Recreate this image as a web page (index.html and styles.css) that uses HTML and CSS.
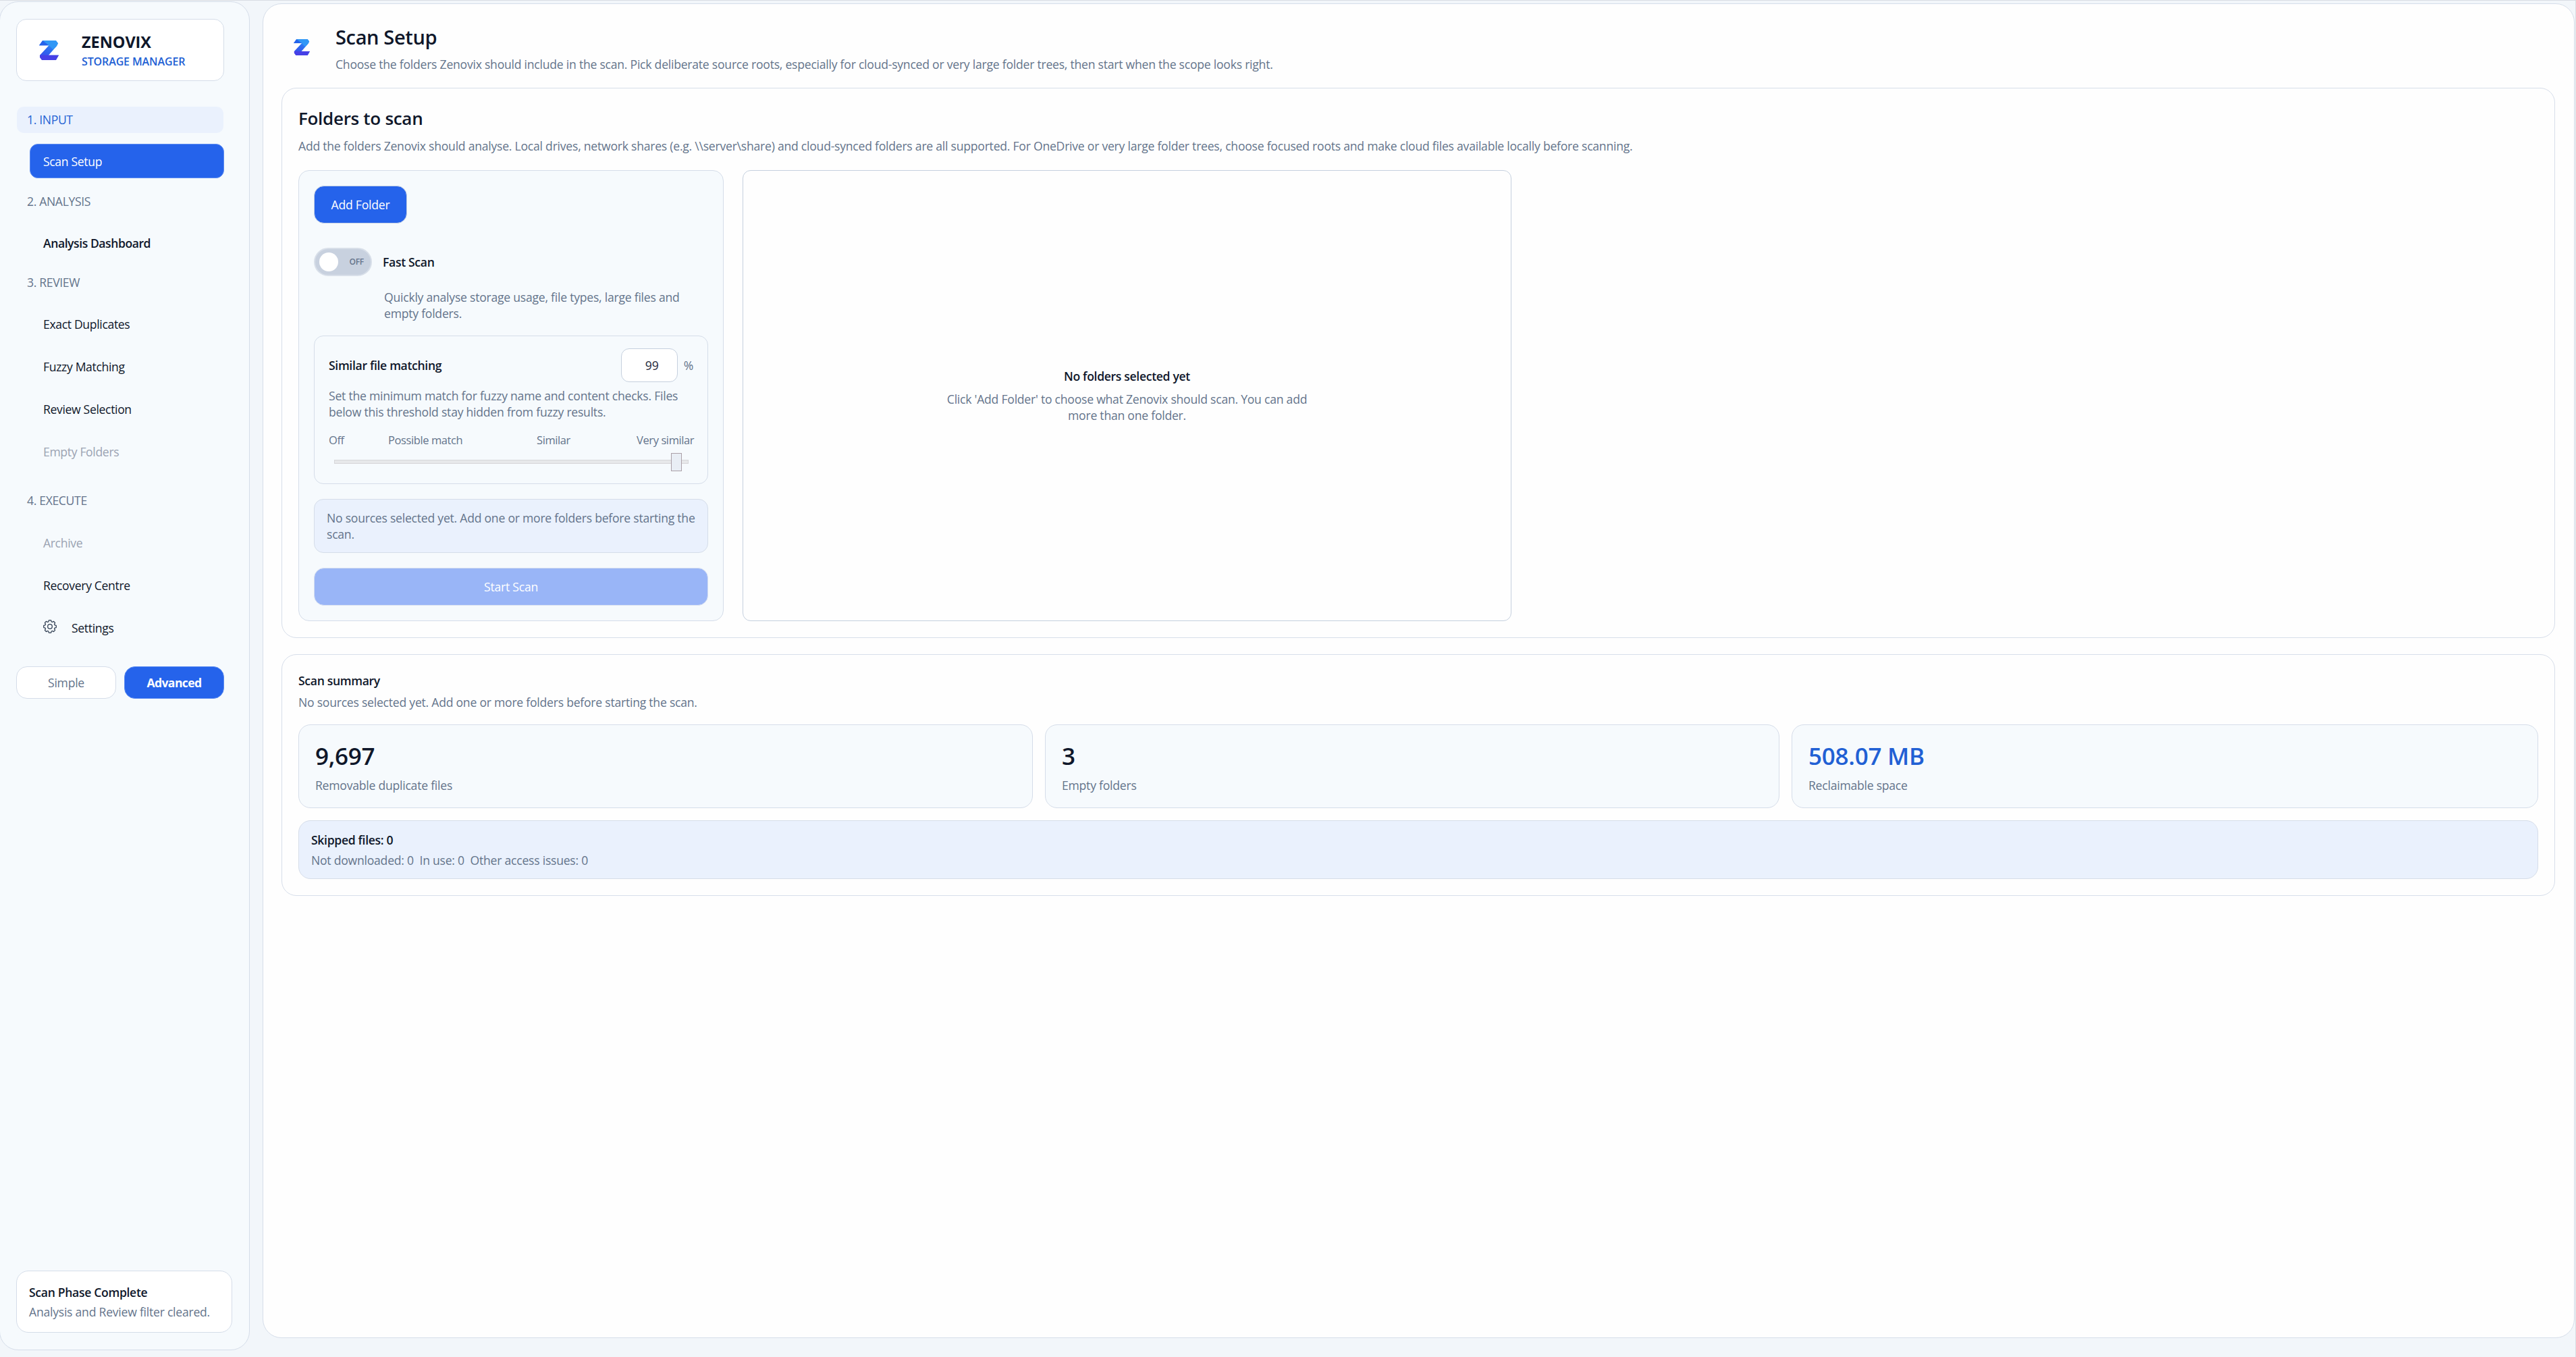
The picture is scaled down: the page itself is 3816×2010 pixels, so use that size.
FILE: index.html
```html
<!DOCTYPE html>
<html lang="en">
<head>
<meta charset="utf-8">
<title>Zenovix Storage Manager</title>
<link rel="stylesheet" href="styles.css">
</head>
<body>
<svg width="0" height="0" class="defs" aria-hidden="true">
  <defs>
    <linearGradient id="zmid" x1="0.8" y1="0" x2="0.2" y2="1">
      <stop offset="0" stop-color="#2f9bf7"/><stop offset="0.5" stop-color="#2d6cf0"/><stop offset="1" stop-color="#3a46ea"/>
    </linearGradient>
    <symbol id="zlogo" viewBox="0 0 28 28" preserveAspectRatio="none">
      <path d="M5 0H24L27 4L25 8L13.500 21H28L24 28H4L1 24V21L14 7H0Z" fill="url(#zmid)"/>
      <path d="M5 0L14 7H0Z" fill="#2563eb"/>
      <path d="M5 0H24L27 4L25 8L20 13L14 7Z" fill="#3097f6"/>
      <path d="M1 21H28L24 28H4L1 24Z" fill="#4640e6"/>
    </symbol>
  </defs>
</svg>
<div class="app">
  <aside class="sidebar">
    <div class="brand">
      <svg class="brand-logo"><use href="#zlogo"/></svg>
      <div class="brand-text">
        <div class="brand-name">ZENOVIX</div>
        <div class="brand-sub">STORAGE MANAGER</div>
      </div>
    </div>
    <nav class="nav">
      <div class="group current">1. INPUT</div>
      <a class="item active">Scan Setup</a>
      <div class="group">2. ANALYSIS</div>
      <a class="item strong">Analysis Dashboard</a>
      <div class="group">3. REVIEW</div>
      <a class="item">Exact Duplicates</a>
      <a class="item">Fuzzy Matching</a>
      <a class="item">Review Selection</a>
      <a class="item disabled">Empty Folders</a>
      <div class="group execute">4. EXECUTE</div>
      <a class="item disabled">Archive</a>
      <a class="item">Recovery Centre</a>
      <a class="item"><svg class="gear" viewBox="0 0 20 20"><path d="M8.300 .9Q10 .4 11.700 .9L12.200 3L13.500 3.500L15.300 2.400Q16.900 3.300 17.600 4.700L16.500 6.500L17 7.800L19.100 8.300Q19.600 10 19.100 11.700L17 12.200L16.500 13.500L17.600 15.300Q16.700 16.900 15.300 17.600L13.500 16.500L12.200 17L11.700 19.100Q10 19.600 8.300 19.100L7.800 17L6.500 16.500L4.700 17.600Q3.100 16.700 2.400 15.300L3.500 13.500L3 12.200L.9 11.700Q.4 10 .9 8.300L3 7.800L3.500 6.500L2.400 4.700Q3.300 3.100 4.700 2.400L6.500 3.500L7.800 3Z"/><circle cx="10" cy="10" r="3.300"/></svg>Settings</a>
    </nav>
    <div class="modes">
      <div class="mode">Simple</div>
      <div class="mode on">Advanced</div>
    </div>
    <div class="phase">
      <div class="title">Scan Phase Complete</div>
      <div class="phase-note">Analysis and Review filter cleared.</div>
    </div>
  </aside>
  <main class="main">
    <header class="header">
      <svg class="head-logo"><use href="#zlogo"/></svg>
      <div>
        <h1>Scan Setup</h1>
        <p class="lead">Choose the folders Zenovix should include in the scan. Pick deliberate source roots, especially for cloud-synced or very large folder trees, then start when the scope looks right.</p>
      </div>
    </header>
    <section class="card folders">
      <h2>Folders to scan</h2>
      <p class="intro">Add the folders Zenovix should analyse. Local drives, network shares (e.g. \\server\share) and cloud-synced folders are all supported. For OneDrive or very large folder trees, choose focused roots and make cloud files available locally before scanning.</p>
      <div class="cols">
        <div class="options">
          <div class="btn add">Add Folder</div>
          <div class="fast">
            <div class="toggle"><span class="knob"></span><span class="off">OFF</span></div>
            <div class="title">Fast Scan</div>
          </div>
          <p class="fast-note">Quickly analyse storage usage, file types, large files and<br>empty folders.</p>
          <div class="matching">
            <div class="match-head">
              <div class="title">Similar file matching</div>
              <div class="num">99</div>
              <div class="pct">%</div>
            </div>
            <p class="match-note">Set the minimum match for fuzzy name and content checks. Files<br>below this threshold stay hidden from fuzzy results.</p>
            <div class="scale"><span>Off</span><span>Possible match</span><span>Similar</span><span class="last">Very similar</span></div>
            <div class="slider"><div class="thumb"></div></div>
          </div>
          <div class="info">No sources selected yet. Add one or more folders before starting the<br>scan.</div>
          <div class="btn start">Start Scan</div>
        </div>
        <div class="list">
          <div class="title">No folders selected yet</div>
          <p>Click 'Add Folder' to choose what Zenovix should scan. You can add<br>more than one folder.</p>
        </div>
      </div>
    </section>
    <section class="card summary">
      <div class="title">Scan summary</div>
      <p class="sum-note">No sources selected yet. Add one or more folders before starting the scan.</p>
      <div class="stats">
        <div class="stat"><div class="value">9,697</div><div class="label">Removable duplicate files</div></div>
        <div class="stat"><div class="value">3</div><div class="label">Empty folders</div></div>
        <div class="stat"><div class="value blue">508.07 MB</div><div class="label">Reclaimable space</div></div>
      </div>
      <div class="skipped">
        <div class="title">Skipped files: 0</div>
        <p class="skip-note">Not downloaded: 0&nbsp; In use: 0&nbsp; Other access issues: 0</p>
      </div>
    </section>
  </main>
</div>
</body>
</html>
```
FILE: styles.css
```css
* { box-sizing: border-box; margin: 0; padding: 0; }
body { width: 3816px; height: 2010px; overflow: hidden; background: #f2f6fa; font: 17.6px/24px "Open Sans", "Noto Sans", sans-serif; letter-spacing: -0.24px; color: #64748b; border-top: 1px solid #d9dde3; border-right: 1px solid #dadee3; }
.defs { position: absolute; }
.app { display: flex; height: 2009px; padding-top: 1px; }
.title { font-weight: 600; color: #0f172a; letter-spacing: -0.33px; }

.sidebar { width: 371px; height: 1998px; margin-left: -1px; background: #f6fafd; border: 1px solid #d5dde9; border-radius: 28px; padding: 25px 24px; display: flex; flex-direction: column; }
.brand { width: 308px; height: 92px; background: #fff; border: 1px solid #d5dde9; border-radius: 15px; display: flex; align-items: center; padding-left: 33px; }
.brand-logo { width: 29px; height: 29px; margin-right: 34px; }
.brand-text { padding-top: 2px; }
.brand-name { font-size: 23.5px; font-weight: 700; line-height: 32px; color: #0f172a; letter-spacing: -0.05px; }
.brand-sub { font-size: 16px; font-weight: 600; line-height: 26px; color: #2160d4; letter-spacing: -0.12px; }
.nav { margin-top: 38px; letter-spacing: -0.35px; }
.group { width: 306px; height: 39px; margin: 14px 0 16px 1px; padding-left: 15px; line-height: 39px; border-radius: 10px; }
.group.current { background: #eaf1fd; color: #2563d4; margin-top: 0; }
.group.execute { margin-top: 28px; margin-bottom: 17px; }
.item { display: flex; align-items: center; width: 288px; height: 51px; margin-left: 20px; padding-left: 19px; border-radius: 12px; border: 1px solid transparent; color: #0f172a; }
.item + .item { margin-top: 12px; }
.item.active { background: #2563eb; color: #fff; border-color: #5d8cf0; margin-bottom: 15px; }
.item.strong { font-weight: 600; letter-spacing: -0.45px; }
.item.disabled { color: #9ba3b2; }
.gear { width: 20px; height: 20px; margin: 0 22px 3px 0; fill: none; stroke: #334155; stroke-width: 1.3; stroke-linejoin: round; }
.modes { display: flex; gap: 12px; margin-top: 32px; }
.mode { width: 148px; height: 48px; line-height: 46px; text-align: center; border: 1px solid #d5dde9; border-radius: 16px; background: #fff; }
.mode.on { background: #2563eb; color: #fff; font-weight: 700; border-color: #5d8cf0; letter-spacing: -0.6px; }
.phase { width: 320px; height: 92px; margin-top: auto; background: #fff; border: 1px solid #d5dde9; border-radius: 18px; padding: 19px 18px; }
.phase-note { margin-top: 5px; }

.main { flex: 1; margin: 3px 1px 0 19px; height: 1977px; background: #fefefe; border: 1px solid #d5dde9; border-radius: 28px; padding: 0 28px 0 27px; }
.header { display: flex; height: 124px; padding-top: 30px; }
.head-logo { width: 24px; height: 24px; margin: 22px 38px 0 18px; }
h1 { font-size: 29px; line-height: 38px; font-weight: 600; color: #0f172a; letter-spacing: -0.35px; }
.lead { margin-top: 9px; }
.card { border: 1px solid #d7deea; border-radius: 22px; padding: 0 24px; }
.folders { height: 815px; padding-top: 26px; }
h2 { font-size: 26px; line-height: 36px; font-weight: 600; color: #0f172a; letter-spacing: -0.3px; }
.intro { margin-top: 11px; }
.cols { display: flex; gap: 28px; margin-top: 24px; }
.options { width: 630px; height: 668px; background: #f6fafd; border: 1px solid #d5dde9; border-radius: 16px; padding: 22px; }
.btn { background: #2563eb; color: #fff; text-align: center; height: 56px; line-height: 54px; border: 1px solid #c3cfe3; border-radius: 15px; }
.add { width: 138px; }
.fast { display: flex; align-items: center; gap: 16px; margin-top: 36px; height: 42px; }
.toggle { width: 86px; height: 42px; border: 2px solid #d8dfe9; border-radius: 21px; background: #c8d1df; display: flex; align-items: center; padding: 0 10px 0 6px; justify-content: space-between; }
.knob { width: 28px; height: 28px; border-radius: 50%; background: #fff; }
.off { font-size: 12px; font-weight: 600; }
.fast-note { margin: 19px 0 21px 104px; }
.matching { height: 220px; border: 1px solid #d5dde9; border-radius: 14px; padding: 18px 21px; }
.match-head { display: flex; align-items: center; }
.match-head .title { flex: 1; }
.num { width: 84px; height: 50px; line-height: 48px; text-align: center; padding-left: 8px; background: #fff; border: 1px solid #c5d0de; border-radius: 12px; color: #1e293b; margin-right: 9px; }
.match-note { margin-top: 8px; }
.scale { display: grid; grid-template-columns: 88px 220px 148px 1fr; margin-top: 18px; font-size: 16.5px; white-space: nowrap; letter-spacing: -0.4px; }
.scale .last { text-align: right; }
.slider { width: 525px; height: 6px; margin: 17px 0 0 8px; background: #e7e8ea; border: 1px solid #d6d6d9; position: relative; }
.thumb { position: absolute; left: 498px; top: -11px; width: 16px; height: 27px; background: #e9eef5; border: 1px solid #aba0a8; }
.info { height: 80px; margin-top: 22px; padding: 15px 18px; background: #eaf1fd; border: 1px solid #d5dde9; border-radius: 14px; }
.start { margin-top: 22px; background: #99b5f7; border-color: #d5def0; }
.list { width: 1139px; height: 668px; border: 1px solid #c5d0de; border-radius: 12px; text-align: center; display: flex; flex-direction: column; justify-content: center; gap: 10px; }
.summary { margin-top: 24px; height: 358px; padding-top: 26px; }
.sum-note { margin-top: 8px; }
.stats { display: grid; grid-template-columns: 1088px 1088px 1fr; gap: 18px; margin-top: 21px; }
.stat { height: 124px; background: #f6fafd; border: 1px solid #d5dde9; border-radius: 18px; padding: 22px 24px; }
.value { font-size: 35px; line-height: 48px; font-weight: 600; color: #0f172a; }
.value.blue { color: #2160d4; }
.label { margin-top: 7px; }
.skipped { height: 87px; margin-top: 18px; padding: 16px 18px; background: #eaf1fd; border: 1px solid #d5dde9; border-radius: 18px; }
.skip-note { margin-top: 6px; }
```
